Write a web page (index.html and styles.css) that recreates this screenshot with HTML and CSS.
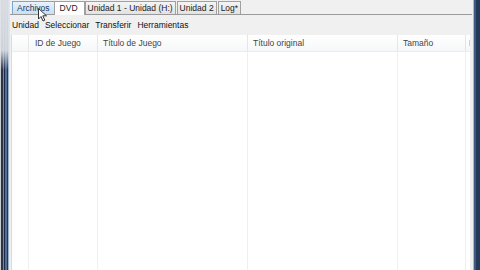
FILE: index.html
```html
<!DOCTYPE html>
<html>
<head>
<meta charset="utf-8">
<link rel="stylesheet" href="styles.css">
</head>
<body>
<div class="screen">
  <div class="frame-left"></div>
  <div class="main">
    <div class="tabs">
      <div class="tab hover">Archivos</div>
      <div class="tab active">DVD</div>
      <div class="tab">Unidad 1 - Unidad (H:)</div>
      <div class="tab">Unidad 2</div>
      <div class="tab">Log*</div>
    </div>
    <div class="panel">
      <div class="menu">
        <span>Unidad</span><span>Seleccionar</span><span>Transferir</span><span>Herramientas</span>
      </div>
      <div class="grid">
        <div class="row head">
          <div class="c c0"></div>
          <div class="c c1">ID de Juego</div>
          <div class="c c2">Título de Juego</div>
          <div class="c c3">Título original</div>
          <div class="c c4">Tamaño</div>
          <div class="c c5">I</div>
        </div>
        <div class="row body">
          <div class="c c0"></div>
          <div class="c c1"></div>
          <div class="c c2"></div>
          <div class="c c3"></div>
          <div class="c c4"></div>
          <div class="c c5"></div>
        </div>
      </div>
    </div>
    <svg class="cursor" width="10" height="14" viewBox="0 0 10 14">
      <path d="M0.5 0.5 L0.5 11 L3 8.5 L5 13 L6.8 12.2 L4.8 7.8 L8.5 7.8 Z" fill="#fff" stroke="#333" stroke-width="1"/>
    </svg>
  </div>
  <div class="frame-right"></div>
</div>
</body>
</html>
```
FILE: styles.css
```css
html, body {
  margin: 0;
  padding: 0;
  width: 480px;
  height: 270px;
  overflow: hidden;
  background: #f0f0f0;
}
.screen {
  display: flex;
  width: 480px;
  height: 270px;
  font-family: "Liberation Sans", "DejaVu Sans", sans-serif;
  font-size: 8.5px;
  color: #222;
}
.frame-left {
  width: 10px;
  flex: none;
  background:
    linear-gradient(to bottom, rgba(225,228,232,0.95) 0, rgba(225,228,232,0.9) 50px, rgba(225,228,232,0) 70px),
    linear-gradient(to right, #c8ccd2 0 1px, #2c3548 1px 3px, #6a88b0 3px 4px, #1c2a48 4px 5px, #4e6f9c 5px 7px, #24365a 7px 8px, #9fb0c0 8px 9px, #e8ece8 9px 10px);
}
.frame-right {
  width: 7px;
  flex: none;
  background: linear-gradient(to right, #a8b8c8 0 1px, #3e5a80 1px 3px, #24385a 3px 7px);
}
.main {
  flex: 1;
  display: flex;
  flex-direction: column;
  position: relative;
  min-width: 0;
}
.tabs {
  display: flex;
  height: 14px;
  padding-left: 2px;
  align-items: flex-end;
}
.tab {
  height: 12px;
  line-height: 12px;
  padding: 0 2px;
  border: 1px solid #a0a0a0;
  border-bottom: none;
  margin-right: 1px;
  background: linear-gradient(#f4f4f4, #e2e2e2);
  white-space: nowrap;
}
.tab.hover {
  background: linear-gradient(#e8f2fc, #c8def2);
  border-color: #7aa6d0;
  color: #1a3a60;
  padding: 0 4px;
}
.tab.active {
  background: #fff;
  height: 13px;
  margin: 0 0 -1px -2px;
  padding: 0 6px 0 5px;
  position: relative;
  z-index: 1;
}
.panel {
  flex: 1;
  display: flex;
  flex-direction: column;
  border-top: 1px solid #9a9a9a;
  margin-right: 1px;
  background: #f0f0f0;
}
.menu {
  height: 20px;
  display: flex;
  align-items: center;
  gap: 6px;
  padding-left: 2px;
  color: #111;
}
.grid {
  flex: 1;
  display: flex;
  flex-direction: column;
  background: #fff;
  margin-left: 1px;
  margin-right: 2px;
  border-left: 1px solid #d8dce0;
}
.row {
  display: flex;
}
.row.head {
  height: 16px;
  border-bottom: 1px solid #ececec;
  background: linear-gradient(#ffffff, #f6f7f8);
}
.row.body {
  flex: 1;
}
.c {
  flex: none;
  border-right: 1px solid #f0f0f0;
  white-space: nowrap;
  overflow: hidden;
  padding-left: 5px;
  box-sizing: border-box;
  line-height: 17px;
  color: #444;
}
.row.head .c { border-right-color: #e6e6e6; }
.c0 { width: 17px; padding: 0; }
.c1 { width: 69px; padding-left: 6px; }
.c2 { width: 150px; }
.c3 { width: 150px; }
.c4 { width: 68px; }
.c5 { flex: 1; padding-left: 3px; border-right: none; }
.cursor {
  position: absolute;
  left: 28px;
  top: 8px;
}
```
